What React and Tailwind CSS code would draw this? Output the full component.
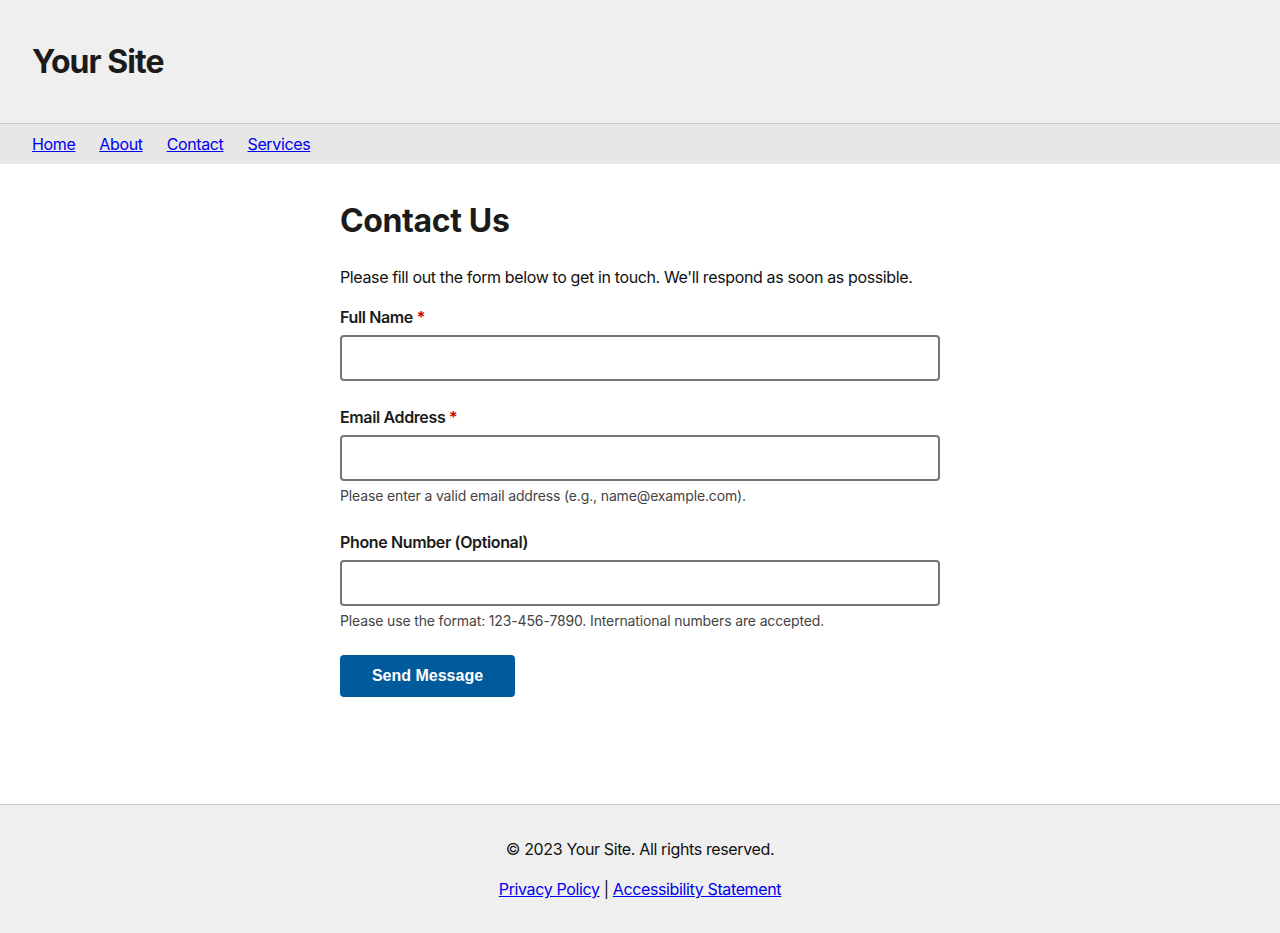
export default function App() {
  return (
    <div className="min-h-screen flex flex-col bg-white text-[#1b1b1b] font-['Inter',sans-serif] tracking-[-0.023em]">
      {/* Header */}
      <header className="bg-[#efefef] border-b border-[#cccccc] px-8 py-[42px]">
        <h1 className="text-[32px] leading-[39px] font-bold text-[#1b1b1b] tracking-[-0.03em]">Your Site</h1>
      </header>

      {/* Nav */}
      <nav className="bg-[#e7e7e7] px-8 py-2">
        <ul className="flex gap-6 text-base leading-6">
          <li><a href="#" className="text-[#0000ee] underline">Home</a></li>
          <li><a href="#" className="text-[#0000ee] underline">About</a></li>
          <li><a href="#" className="text-[#0000ee] underline">Contact</a></li>
          <li><a href="#" className="text-[#0000ee] underline">Services</a></li>
        </ul>
      </nav>

      {/* Main */}
      <main className="flex-1">
        <div className="max-w-[600px] mx-auto pt-[38px]">
          <h2 className="text-[32px] leading-[38px] font-bold text-[#1b1b1b]">Contact Us</h2>
          <p className="mt-[25px] text-base leading-6 text-[#111]">
            Please fill out the form below to get in touch. We'll respond as soon as possible.
          </p>

          <form className="mt-4" onSubmit={(e) => e.preventDefault()}>
            <div className="mb-6">
              <label className="block font-semibold text-base leading-6">
                Full Name <span className="text-[#d00000]">*</span>
              </label>
              <input type="text" className="mt-[6px] block w-full h-[46px] border-2 border-[#767676] rounded px-2" />
            </div>

            <div className="mb-6">
              <label className="block font-semibold text-base leading-6">
                Email Address <span className="text-[#d00000]">*</span>
              </label>
              <input type="email" className="mt-[6px] block w-full h-[46px] border-2 border-[#767676] rounded px-2" />
              <p className="mt-[5px] text-[14px] leading-5 text-[#444] tracking-[-0.01em]">
                Please enter a valid email address (e.g., name@example.com).
              </p>
            </div>

            <div className="mb-6">
              <label className="block font-semibold text-base leading-6">Phone Number (Optional)</label>
              <input type="tel" className="mt-[6px] block w-full h-[46px] border-2 border-[#767676] rounded px-2" />
              <p className="mt-[5px] text-[14px] leading-5 text-[#444] tracking-[-0.01em]">
                Please use the format: 123-456-7890. International numbers are accepted.
              </p>
            </div>

            <button
              type="submit"
              className="w-[175px] h-[42px] bg-[#005a9c] text-white rounded font-bold text-base tracking-normal font-['Liberation_Sans',Arial,sans-serif]"
            >
              Send Message
            </button>
          </form>
        </div>
      </main>

      {/* Footer */}
      <footer className="bg-[#efefef] border-t border-[#cccccc] py-8 text-center text-base leading-6 text-[#111]">
        <p>© 2023 Your Site. All rights reserved.</p>
        <p className="mt-4">
          <a href="#" className="text-[#0000ee] underline">Privacy Policy</a> |{" "}
          <a href="#" className="text-[#0000ee] underline">Accessibility Statement</a>
        </p>
      </footer>
    </div>
  );
}
